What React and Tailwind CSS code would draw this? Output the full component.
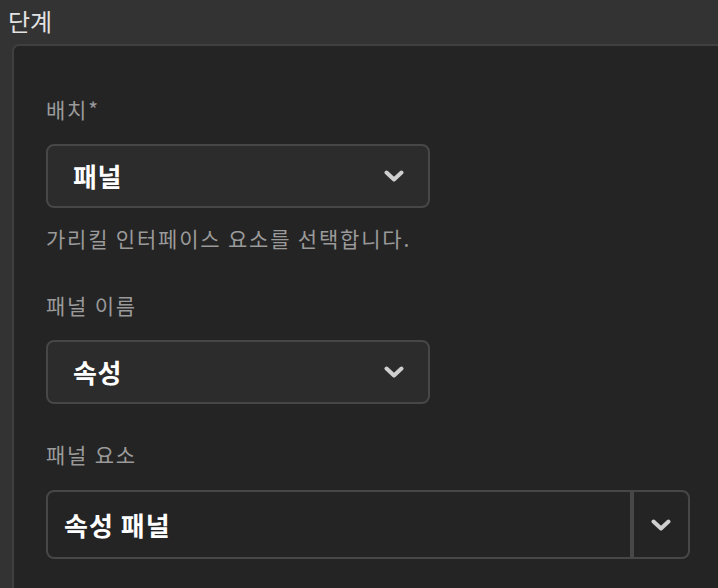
const font = { fontFamily: '"Noto Sans CJK KR", "Noto Sans", sans-serif' };

function Chevron({ className }) {
  return (
    <svg viewBox="0 0 20 12" className={className} fill="none" stroke="currentColor" strokeWidth="4" strokeLinecap="round" strokeLinejoin="round">
      <path d="M2.5 2.5 L10 9.5 L17.5 2.5" />
    </svg>
  );
}

function Select({ value }) {
  return (
    <div className="flex h-[64px] w-[384px] items-center justify-between rounded-[8px] border-2 border-[#474747] bg-[#2c2c2c] pl-[25px] pr-[24px]">
      <span className="text-[26px] font-bold leading-none tracking-[0.5px] text-white">{value}</span>
      <Chevron className="h-[12px] w-[20px] text-[#cfcfcf]" />
    </div>
  );
}

export default function App() {
  return (
    <div className="h-[588px] w-[718px] overflow-hidden bg-[#333333]" style={font}>
      <div className="flex h-[44px] items-start pl-2 pt-[5px] text-[24px] leading-[32px] text-[#e2e2e2]">단계</div>
      <div className="ml-3 h-[600px] w-[760px] rounded-tl-[7px] border-l-2 border-t-2 border-[#404040] bg-[#242424] pl-8 pt-[49px]">
        <div className="text-[21px] leading-[28px] tracking-[1.8px] text-[#9a9a9a]">배치*</div>
        <div className="mt-[21px]">
          <Select value="패널" />
        </div>
        <div className="mt-[16px] text-[21px] leading-[28px] tracking-[1.8px] text-[#9a9a9a]">가리킬 인터페이스 요소를 선택합니다.</div>
        <div className="mt-[39px] text-[21px] leading-[28px] tracking-[1.8px] text-[#9a9a9a]">패널 이름</div>
        <div className="mt-[21px]">
          <Select value="속성" />
        </div>
        <div className="mt-[36px] text-[21px] leading-[28px] tracking-[1.8px] text-[#9a9a9a]">패널 요소</div>
        <div className="mt-[22px] flex h-[69px] w-[644px]">
          <div className="flex flex-1 items-center rounded-l-[8px] border-2 border-[#474747] bg-[#242424] pl-[16px]">
            <span className="text-[26px] font-bold leading-none tracking-[1px] text-white">속성 패널</span>
          </div>
          <div className="flex w-[58px] items-center justify-center rounded-r-[8px] border-2 border-[#474747] bg-[#242424]">
            <Chevron className="h-[12px] w-[20px] text-[#cfcfcf]" />
          </div>
        </div>
      </div>
    </div>
  );
}
